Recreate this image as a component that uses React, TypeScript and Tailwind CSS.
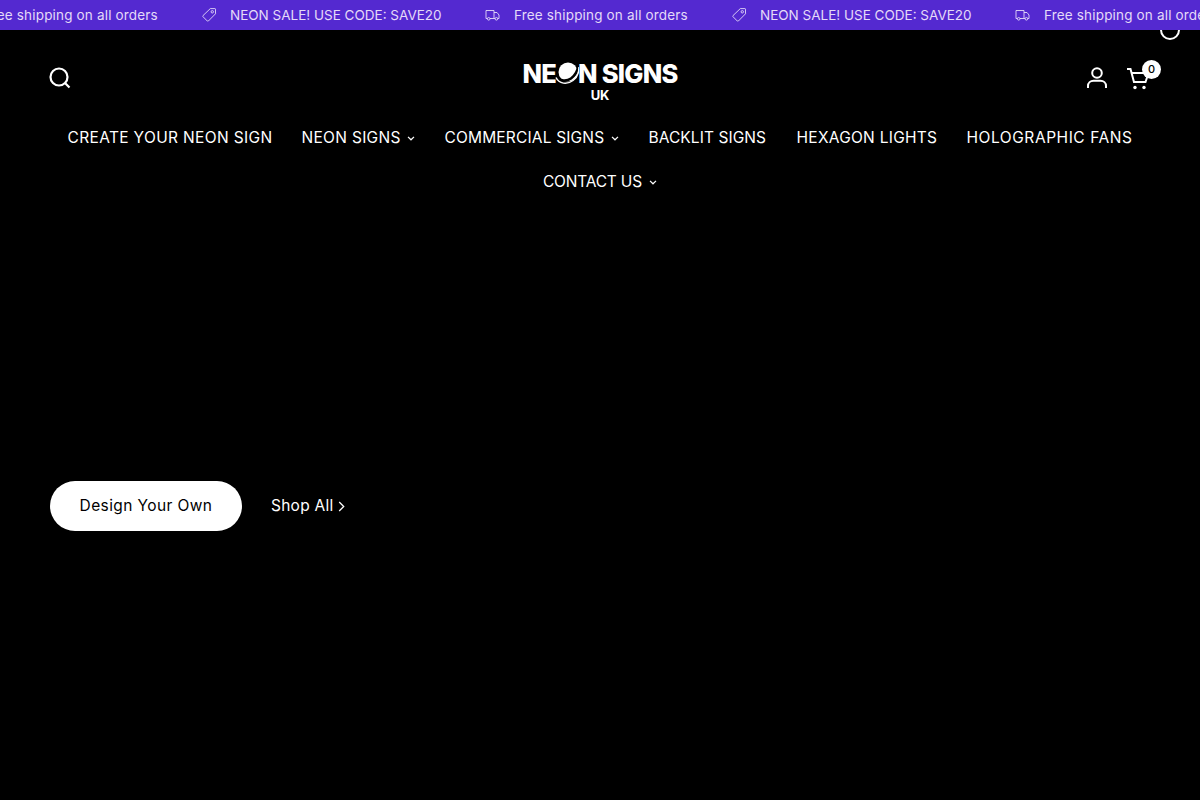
import React from "react";

const font = { fontFamily: "Inter, 'Liberation Sans', sans-serif" };

function Tag() {
  return (
    <svg width="16" height="16" viewBox="0 0 16 16" fill="none" stroke="currentColor" strokeWidth="0.9" className="shrink-0 text-[#e4daf8]">
      <path d="M9.300 1.600h4.600a.6.6 0 0 1 .6.6v4.600L7.400 14a.8.8 0 0 1-1.100 0L2 9.700a.8.8 0 0 1 0-1.100z" />
      <circle cx="11.300" cy="4.800" r="1.200" />
    </svg>
  );
}

function Truck() {
  return (
    <svg width="15" height="16" viewBox="0 0 15 16" fill="none" stroke="currentColor" strokeWidth="0.9" className="shrink-0 text-[#e4daf8]">
      <path d="M2.300 11.500H1V3.500h8v8H5" />
      <path d="M9 5.500h3l2 2.500v3.500h-1.200M9 11.500h1" />
      <circle cx="3.700" cy="11.800" r="1.300" />
      <circle cx="11.400" cy="11.800" r="1.300" />
    </svg>
  );
}

function Free() {
  return (
    <div className="flex items-center shrink-0">
      <Truck />
      <span className="ml-[14px] mr-[43px] w-[174px] text-[13.500px] tracking-[0.170px] whitespace-nowrap text-[#e4daf8]">Free shipping on all orders</span>
    </div>
  );
}

function Sale() {
  return (
    <div className="flex items-center shrink-0">
      <Tag />
      <span className="ml-[13px] mr-[43px] w-[212px] text-[13.500px] whitespace-nowrap text-[#e4daf8]">NEON SALE! USE CODE: SAVE20</span>
    </div>
  );
}

function Chevron() {
  return (
    <svg width="8" height="5" viewBox="0 0 8 5" fill="none" stroke="currentColor" strokeWidth="1.200" className="ml-[7px] mt-[1px]">
      <path d="M1 .900 4 3.800 7 .900" />
    </svg>
  );
}

function NavItem({ label, w, chevron, track }: { label: string; w: number; chevron?: boolean; track: string }) {
  return (
    <a className="flex items-center h-[44px] text-[15.500px] text-white whitespace-nowrap">
      <span className={track} style={{ width: w }}>{label}</span>
      {chevron && <Chevron />}
    </a>
  );
}

function Logo() {
  return (
    <div className="flex flex-col items-center text-white font-extrabold leading-none" style={{ fontFamily: "Inter, sans-serif" }}>
      <div className="flex items-center h-[22px] text-[25.500px] tracking-[-0.800px] whitespace-nowrap">
        <span>NE</span>
        <svg width="24" height="24" viewBox="0 0 24 24" className="mx-[-1px] shrink-0">
          <circle cx="13" cy="10" r="9.500" fill="white" />
          <path d="M1 13.500C3 19 11 20 16 16.500S23 7 23.500 3" stroke="black" strokeWidth="2.600" fill="none" />
          <path d="M1 15.500C4 22 12 23 18 18.500S24 8 24 5" stroke="white" strokeWidth="1.500" fill="none" />
        </svg>
        <span>N</span>
        <span className="ml-[5px]">SIGNS</span>
      </div>
      <div className="text-[13px] font-bold tracking-[-0.300px] mt-[4px]">UK</div>
    </div>
  );
}

export default function App() {
  return (
    <div className="relative w-[1200px] h-[800px] overflow-hidden bg-black" style={font}>
      <div className="h-[30px] bg-[#5429d0] overflow-hidden flex items-center relative z-10">
        <div className="flex ml-[-45px]">
          <Free />
          <Sale />
          <Free />
          <Sale />
          <Free />
        </div>
      </div>
      <div className="absolute left-[1160px] top-[20px] w-[20px] h-[20px] rounded-full border-2 border-white" />

      <header className="relative h-[86px] pl-[49px] pr-[38px] pt-[9px] flex items-center justify-between">
        <svg width="22" height="22" viewBox="0 0 22 22" fill="none" stroke="white" strokeWidth="2.200">
          <circle cx="10" cy="10" r="8.500" />
          <path d="M16 16l4.500 4.500" />
        </svg>
        <div className="absolute left-0 right-0 flex justify-center top-[33px]">
          <Logo />
        </div>
        <div className="flex items-center">
          <svg width="22" height="22" viewBox="0 0 22 22" fill="none" stroke="white" strokeWidth="2" className="ml-[-1px]">
            <circle cx="11" cy="6" r="4.800" />
            <path d="M2 21v-2c0-3 2.500-5.200 5.500-5.200h7c3 0 5.500 2.200 5.500 5.200v2" />
          </svg>
          <div className="relative ml-[18px] w-[36px] h-[22px]">
            <svg width="24" height="24" viewBox="0 0 24 24" fill="none" stroke="white" strokeWidth="2" className="absolute left-0 top-[0px]">
              <path d="M1 2h3.500l3.500 13h11.500l3-9H6" />
              <circle cx="9" cy="20.500" r="1.700" fill="white" stroke="none" />
              <circle cx="18" cy="20.500" r="1.700" fill="white" stroke="none" />
            </svg>
            <div className="absolute left-[16px] top-[-7px] w-[19px] h-[19px] rounded-full bg-white text-black text-[11px] font-medium flex items-center justify-center">0</div>
          </div>
        </div>
      </header>

      <nav className="flex flex-wrap justify-center gap-x-[30px] w-[1100px] mx-auto">
        <NavItem label="CREATE YOUR NEON SIGN" w={204} track="tracking-[0.350px]" />
        <NavItem label="NEON SIGNS" w={98} track="tracking-[0.300px]" chevron />
        <NavItem label="COMMERCIAL SIGNS" w={159} track="tracking-[0.170px]" chevron />
        <NavItem label="BACKLIT SIGNS" w={118} track="tracking-[0.070px]" />
        <NavItem label="HEXAGON LIGHTS" w={140} track="tracking-[0.270px]" />
        <NavItem label="HOLOGRAPHIC FANS" w={166} track="tracking-[0.550px]" />
        <NavItem label="CONTACT US" w={99} track="tracking-[-0.200px]" chevron />
      </nav>

      <div className="flex items-center pl-[50px] mt-[277px]">
        <a className="flex items-center justify-center w-[192px] h-[50px] rounded-[25px] bg-white text-black text-[15.500px] tracking-[0.400px]">Design Your Own</a>
        <a className="flex items-center ml-[29px] text-white text-[15.500px] tracking-[0.250px]">
          Shop All
          <svg width="7" height="11" viewBox="0 0 7 11" fill="none" stroke="white" strokeWidth="1.300" className="ml-[5px]">
            <path d="M1.200 1 5.700 5.500 1.200 10" />
          </svg>
        </a>
      </div>
    </div>
  );
}
